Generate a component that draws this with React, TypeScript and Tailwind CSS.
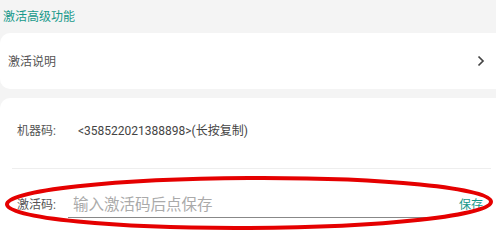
import React from "react";

export default function App() {
  const font = { fontFamily: 'Roboto, "Noto Sans CJK SC", sans-serif' };
  return (
    <div
      className="relative w-[496px] h-[237px] overflow-hidden bg-[#f4f4f4]"
      style={font}
    >
      <div className="h-[33px] pl-[3px] flex items-center text-[12px] leading-none text-[#17998a]">
        激活高级功能
      </div>
      <div className="h-[56px] bg-white rounded-l-[10px] flex items-center justify-between pl-[8px] pr-[11px]">
        <span className="text-[12px] leading-none text-[#555] pt-[1px]">激活说明</span>
        <svg width="8" height="12" viewBox="0 0 8 12">
          <path d="M1.5 1.5 L6 6 L1.5 10.5" fill="none" stroke="#444" strokeWidth="1.7" />
        </svg>
      </div>
      <div className="h-[9px]" />
      <div className="bg-white rounded-tl-[10px] h-[160px]">
        <div className="h-[66px] flex items-center pl-[17px] text-[12px] leading-none text-[#555]">
          <span className="w-[61px]">机器码:</span>
          <span className="text-[#444]">&lt;358522021388898&gt;(长按复制)</span>
        </div>
        <div className="h-[4px]" />
        <div className="mx-[12px] mr-[5px] h-px bg-[#eeeeee]" />
        <div className="h-[72px] flex items-center pl-[17px]">
          <span className="w-[51px] text-[12px] leading-none text-[#555]">激活码:</span>
          <div className="w-[373px] h-[26px] border-b border-[#888] flex items-center pl-[5px] pt-[2px] text-[15.5px] leading-none text-[#aaa]">
            输入激活码后点保存
          </div>
          <span className="ml-[18px] text-[12px] leading-none text-[#17998a]">保存</span>
        </div>
      </div>
      <svg
        className="absolute left-0 top-0 pointer-events-none"
        width="496"
        height="237"
        viewBox="0 0 496 237"
      >
        <ellipse cx="249" cy="203" rx="242" ry="25" fill="none" stroke="#e50000" strokeWidth="4" transform="rotate(-0.3 249 203)" />
      </svg>
    </div>
  );
}
